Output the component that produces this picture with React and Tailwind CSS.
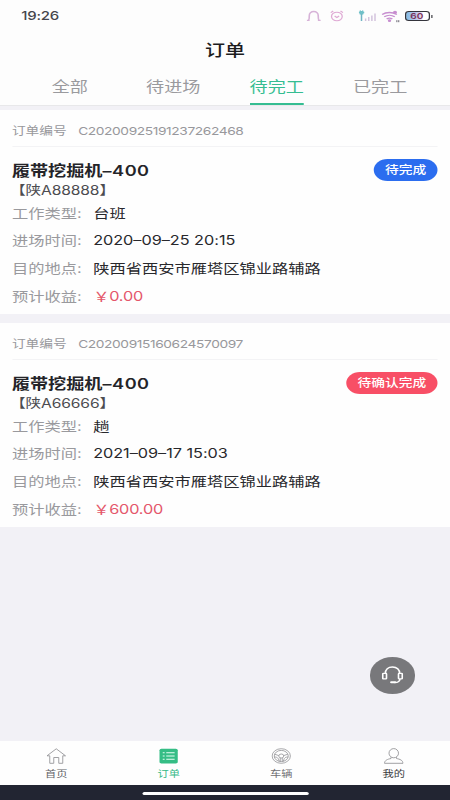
import React from "react";

const tabs = ["全部", "待进场", "待完工", "已完工"];

const orders = [
  {
    no: "C20200925191237262468",
    noClass: "tracking-[-0.31px]",
    name: "履带挖掘机",
    model: "–400",
    plate: "A88888",
    status: "待完成",
    statusClass: "bg-[#2b6def] w-[51px]",
    type: "台班",
    time: "2020–09–25 20:15",
    address: "陕西省西安市雁塔区锦业路辅路",
    income: "0.00",
  },
  {
    no: "C20200915160624570097",
    noClass: "tracking-[-0.31px]",
    name: "履带挖掘机",
    model: "–400",
    plate: "A66666",
    status: "待确认完成",
    statusClass: "bg-[#f84f66] w-[73px]",
    type: "趟",
    time: "2021–09–17 15:03",
    address: "陕西省西安市雁塔区锦业路辅路",
    income: "600.00",
  },
];

const StatusBar = () => (
  <div className="h-8 flex items-center justify-between pl-[17px] pr-[14px]">
    <span className="text-[12px] font-medium text-[#45454b] tracking-[-0.2px]">19:26</span>
    <div className="flex items-center">
      {/* Bell */}
      <svg className="w-[12px] h-[12px] mr-[7px]" viewBox="0 0 12 12" fill="none" stroke="#d7b3d8" strokeWidth="1.3">
        <path d="M.5 10.3h2.200M1.800 10.300c.7-.8.6-2 .6-4.400C2.400 3.300 3.900 1.500 6 1.500s3.600 1.800 3.600 4.400c0 2.400-.1 3.600.6 4.400M9.300 10.300h2.200" />
      </svg>
      {/* Alarm clock */}
      <svg className="w-[11px] h-[12px] mr-[12px]" viewBox="0 0 11 12" fill="none" stroke="#dfa9d4" strokeWidth="1">
        <circle cx="5.500" cy="6.500" r="4.300" />
        <path d="M.6 2.600 2.600 1M10.400 2.600 8.400 1M3.700 6l1.800 1.500L7.300 6" />
      </svg>
      {/* Signal */}
      <svg className="w-[14px] h-[12px] mr-[4px]" viewBox="0 0 14 12" fill="none">
        <path d="M2.200 2v9" stroke="#6fb5c4" strokeWidth="1.200" />
        <path d="M0 2.500h4.400M.9.700l2.600 3.600M3.500.7.900 4.300" stroke="#6fc0c8" strokeWidth="1.300" />
        <path d="M5.500 8.500V11M8 7v4M10.500 5.500V11M13 3.500V11" stroke="#d3c3dd" strokeWidth="1.200" />
      </svg>
      {/* Wifi */}
      <svg className="w-[15px] h-[13px] mr-[4px]" viewBox="0 0 15 13" fill="none" stroke="#c78fd0" strokeWidth="1.300">
        <path d="M.7 4.500C4 1.800 9 1.800 12.500 4.500M2.400 6.800c2.500-2 6-2 8.400 0M4.300 9c1.500-1.200 3.200-1.200 4.600 0" />
        <circle cx="6.600" cy="10.700" r=".7" fill="#c78fd0" />
        <circle cx="11" cy="2.300" r="1" fill="#d77fc7" />
        <path d="M12.500 10.200v2M14 10.200v2" stroke="#55505f" strokeWidth=".8" />
      </svg>
      {/* Battery */}
      <div className="flex items-center">
        <div className="w-[20px] h-[10px] rounded-[3px] border border-[#34343c] bg-linear-to-r from-[#82bce6] via-[#d3cdec] via-60% to-white to-75% flex items-center justify-center">
          <span className="text-[8px] leading-none font-semibold text-[#7c3158] mr-[1px]">60</span>
        </div>
        <span className="w-[1.500px] h-[3px] ml-[0.500px] bg-[#45454b]"></span>
      </div>
    </div>
  </div>
);

const Row = ({ label, children }) => (
  <div className="h-[27.700px] flex items-center text-[13px] whitespace-nowrap">
    <span className="w-[65px] text-[#99999d]">{label}:</span>
    {children}
  </div>
);

const OrderCard = ({ order }) => (
  <div className="h-[204px] bg-[#fefefe] pl-[9.500px] pr-[10px]">
    <div className="h-[37px] pt-[6px] flex items-center border-b border-[#f3f3f5] text-[11px] text-[#98989c]">
      <span className="w-[53px]">订单编号</span>
      <span className={order.noClass}>{order.no}</span>
    </div>
    <div className="h-[25px] mt-[11px] flex items-center justify-between">
      <h2 className="text-[14.500px] font-bold text-[#242428]">
        {order.name}
        <span className="font-semibold tracking-[0.400px]">{order.model}</span>
      </h2>
      <span
        className={`${order.statusClass} h-[22px] -mt-[2px] pt-[2px] rounded-full text-[11px] font-medium text-white flex items-center justify-center`}
      >
        {order.status}
      </span>
    </div>
    <p className="h-[16px] pt-px -ml-[1.500px] flex items-center text-[12.500px] text-[#4c4c50] tracking-[-0.100px]">
      【陕{order.plate}】
    </p>
    <div className="pt-[0.500px]">
      <Row label="工作类型">
        <span className="text-[#28282c]">{order.type}</span>
      </Row>
      <Row label="进场时间">
        <span className="text-[#28282c] tracking-[-0.020px]">{order.time}</span>
      </Row>
      <Row label="目的地点">
        <span className="text-[#28282c]">{order.address}</span>
      </Row>
      <Row label="预计收益">
        <span className="text-[#e4566a] tracking-[-0.150px]">
          ￥{order.income}
        </span>
      </Row>
    </div>
  </div>
);

const HomeIcon = () => (
  <svg className="w-[16px] h-[16px]" viewBox="0 0 16 16" fill="none" stroke="#96969a" strokeWidth=".8">
    <path d="M2.800 7.800H.6L8 .8l7.400 7H13.200v7.500H10V9.500H6v5.800H2.800Z" />
  </svg>
);

const OrderIcon = () => (
  <svg className="w-[16px] h-[16px]" viewBox="0 0 16 16" fill="none">
    <rect x=".6" y=".8" width="14.600" height="14.600" rx="1.500" fill="#35bd85" />
    <path d="M3.200 4.700h1.500M3.200 8h1.500M3.200 11.300h1.500M6 4.700h6.700M6 8h6.700M6 11.300h6.700" stroke="#e6fff4" strokeWidth="1" />
  </svg>
);

const CarIcon = () => (
  <svg className="w-[16px] h-[16px]" viewBox="0 0 16 16" fill="none" stroke="#919195" strokeWidth=".7">
    <circle cx="8" cy="8" r="7.300" />
    <circle cx="8" cy="8" r="5.600" />
    <circle cx="8" cy="8" r="2" />
    <path d="M2.800 6.200 6 7.600M13.200 6.200 10 7.600M2.500 9c2.200 0 3.200.8 3.800 4.200M13.500 9c-2.200 0-3.200.8-3.800 4.200M7.200 10v3.500M8.800 10v3.500" />
  </svg>
);

const UserIcon = () => (
  <svg className="w-[16px] h-[16px]" viewBox="0 0 16 16" fill="none" stroke="#96969a" strokeWidth=".8">
    <ellipse cx="8" cy="5.200" rx="3.800" ry="4.600" />
    <path d="M5.800 9.200v1.300C3 11.200.7 12.300.6 15.300h14.800c-.1-3-2.400-4.100-5.200-4.800V9.200" />
  </svg>
);

const navItems = [
  { label: "首页", icon: HomeIcon, color: "text-[#636367]" },
  { label: "订单", icon: OrderIcon, color: "text-[#35b987]" },
  { label: "车辆", icon: CarIcon, color: "text-[#707074]" },
  { label: "我的", icon: UserIcon, color: "text-[#3c3c40]" },
];

const App = () => {
  return (
    <div className="w-[450px] h-[800px] overflow-hidden">
      {/* 360pt wide phone layout stretched to the window */}
      <div className="relative w-[360px] h-[800px] origin-top-left scale-x-125 flex flex-col bg-[#f2f1f6] font-[Inter,'Noto_Sans_CJK_SC',sans-serif]">
        <header className="h-[106px] bg-[#fdfdfd] border-b border-[#e8e8ea]">
          <StatusBar />
          <h1 className="h-[36px] flex items-center justify-center text-[16px] font-medium text-[#1c1c1e]">订单</h1>
          <nav className="h-[37px] flex px-[14.500px]">
            {tabs.map((tab) => (
              <div key={tab} className="flex-1 flex justify-center">
                <span
                  className={`h-full pt-[3px] flex items-center text-[14.500px] border-b-2 ${
                    tab === "待完工" ? "text-[#35bd92] border-[#35bd92]" : "text-[#9a9a9e] border-transparent"
                  }`}
                >
                  {tab}
                </span>
              </div>
            ))}
          </nav>
        </header>

        <main className="flex-1 pt-[4px] flex flex-col gap-[9px]">
          {orders.map((order) => (
            <OrderCard key={order.no} order={order} />
          ))}
        </main>

        {/* Customer service */}
        <button className="absolute left-[295.500px] top-[657px] w-[36.500px] h-[36.500px] rounded-full bg-[#78787b] flex items-center justify-center">
          <svg className="w-[18px] h-[20px]" viewBox="0 0 18 20" fill="none" stroke="#fff" strokeWidth="1.300">
            <path d="M3.300 8.500C3.300 4.500 5.500 2 9 2s5.700 2.500 5.700 6.500M14.900 14c0 2.300-1.700 3.500-4.300 3.500" />
            <rect x="1.200" y="8.300" width="3" height="5.600" rx=".6" />
            <rect x="13.800" y="8.300" width="3" height="5.600" rx=".6" />
            <path d="M8 17.300h3" strokeWidth="1.900" strokeLinecap="round" />
          </svg>
        </button>

        <footer className="h-[44px] bg-[#fefefe] flex">
          {navItems.map(({ label, icon: Icon, color }) => (
            <div key={label} className="flex-1 pt-[7px] flex flex-col items-center">
              <Icon />
              <span className={`${color} mt-[3px] text-[9px] leading-[13px]`}>{label}</span>
            </div>
          ))}
        </footer>
        <div className="h-[15px] bg-[#222532] pt-[7px] flex justify-center">
          <div className="w-[133px] h-[3px] rounded-full bg-white"></div>
        </div>
      </div>
    </div>
  );
};

export default App;
